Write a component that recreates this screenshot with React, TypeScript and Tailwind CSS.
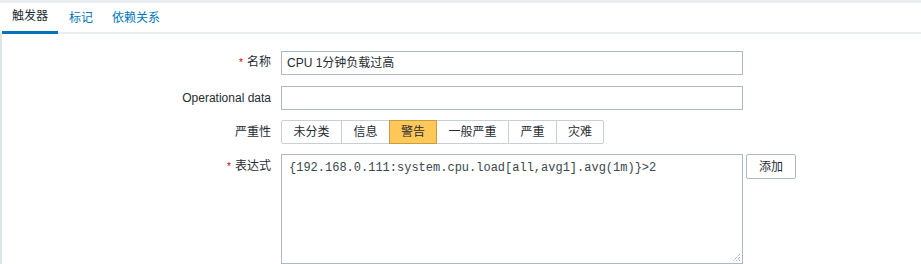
const font = { fontFamily: '"Liberation Sans", Arial, "Noto Sans CJK SC", sans-serif' };

const severities = ["未分类", "信息", "警告", "一般严重", "严重", "灾难"];
const sevWidths = ["w-[61px]", "w-[49px]", "w-[48px]", "w-[73px]", "w-[49px]", "w-[48px]"];

function Label({ text, required }: { text: string; required?: boolean }) {
  return (
    <div className="w-[270px] shrink-0 pr-[1px] text-right text-[12px] leading-[24px] text-[#1f2c33]">
      {required && <span className="mr-[4px] text-[10px] text-[#d40000]">*</span>}
      {text}
    </div>
  );
}

export default function App() {
  return (
    <div className="h-[264px] w-[921px] overflow-hidden bg-white" style={font}>
      <div className="h-[3px] bg-[#ebeef0]" />
      <div className="flex h-[31px] items-end border-b-2 border-[#ebeef0] pl-[2px]">
        <div className="-mb-[2px] flex h-[31px] w-[56px] items-center justify-center border-b-[3px] border-[#0275b8] pb-[2px] text-[12px] text-[#1f2c33]">
          触发器
        </div>
        <div className="flex h-[29px] items-center px-[11px] text-[12px] text-[#0275b8]">标记</div>
        <div className="flex h-[29px] items-center px-[8px] text-[12px] text-[#0275b8]">依赖关系</div>
      </div>
      <div className="flex flex-col gap-[10px] border-l-2 border-[#dfe4e7] pt-[16px]">
        <div className="mb-[1px] flex items-center gap-[9px]">
          <Label text="名称" required />
          <div className="flex h-[24px] w-[462px] items-center border border-[#acbbc2] px-[5px] text-[12px] text-[#1f2c33]">
            CPU 1分钟负载过高
          </div>
        </div>
        <div className="flex items-center gap-[9px]">
          <Label text="Operational data" />
          <div className="h-[24px] w-[462px] border border-[#acbbc2]" />
        </div>
        <div className="flex items-center gap-[9px]">
          <Label text="严重性" />
          <div className="flex h-[24px]">
            {severities.map((s, i) => (
              <div
                key={s}
                className={`${sevWidths[i]} -ml-px flex items-center justify-center border text-[12px] text-[#1f2c33] first:ml-0 first:rounded-l-[2px] last:rounded-r-[2px] ${
                  s === "警告" ? "relative border-[#c79c43] bg-[#ffc859]" : "border-[#c6d0d5] bg-white"
                }`}
              >
                {s}
              </div>
            ))}
          </div>
        </div>
        <div className="flex items-start gap-[9px]">
          <Label text="表达式" required />
          <div className="relative h-[110px] w-[462px] border border-[#acbbc2] px-[7px] pt-[4px] text-[12px] text-[#3a474e]" style={{ fontFamily: '"Liberation Mono", "Courier New", monospace' }}>
            {"{192.168.0.111:system.cpu.load[all,avg1].avg(1m)}>2"}
            <svg className="absolute bottom-[1px] right-[1px]" width="9" height="9" viewBox="0 0 9 9">
              <path d="M8 1 L1 8 M8 4 L4 8 M8 7 L7 8" stroke="#888" strokeWidth="1" strokeDasharray="1 1" />
            </svg>
          </div>
          <div className="-ml-[6px] flex h-[25px] w-[50px] items-center justify-center rounded-[2px] border border-[#acbbc2] bg-white text-[12px] text-[#1f2c33]">
            添加
          </div>
        </div>
      </div>
    </div>
  );
}
